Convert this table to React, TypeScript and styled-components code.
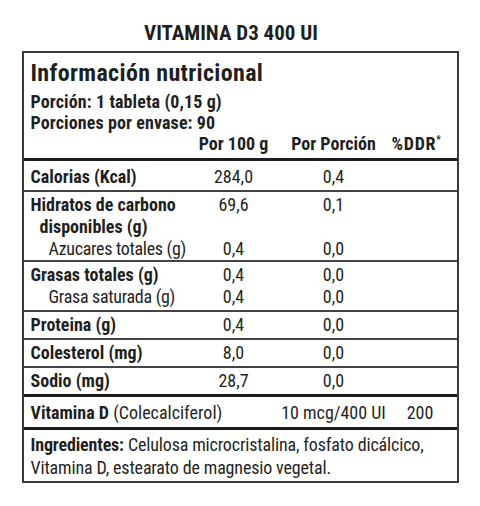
import React from "react";
import styled, { createGlobalStyle } from "styled-components";

const Global = createGlobalStyle`
  html, body { margin: 0; padding: 0; background: #ffffff; }
  body {
    font-family: "Roboto Condensed", "Roboto", sans-serif;
    font-stretch: condensed;
    color: #1f1f1f;
    width: 480px;
    height: 506px;
  }
`;

const Page = styled.div`
  display: flex;
  flex-direction: column;
  align-items: center;
  padding-top: 21px;
`;

const Title = styled.h1`
  margin: 0 18px 0 0;
  font-size: 21px;
  line-height: 24px;
  font-weight: 700;
`;

const Label = styled.div`
  margin-top: 6px;
  width: 437px;
  box-sizing: border-box;
  border: 2px solid #3a3a3a;
`;

const Head = styled.div`
  padding: 4px 7px 3px;
`;

const Heading = styled.h2`
  margin: 0 0 2px;
  font-size: 24px;
  line-height: 32px;
  font-weight: 700;
  letter-spacing: 0.35px;
`;

const Serving = styled.div`
  font-size: 18px;
  line-height: 21px;
  font-weight: 700;
  letter-spacing: 0.1px;
`;

const Grid = styled.div`
  display: grid;
  grid-template-columns: 153px 100px 100px 1fr;
`;

const ColHead = styled.div<{ $wide?: boolean }>`
  font-size: 18px;
  line-height: 22px;
  font-weight: 700;
  letter-spacing: ${(p) => (p.$wide ? "0.7px" : "0")};
  display: flex;
  justify-content: center;
  white-space: nowrap;
`;

const Star = styled.span`
  font-size: 10px;
  line-height: 10px;
  align-self: flex-start;
  margin-top: 2px;
`;

const Section = styled.div<{ $thick?: boolean; $top?: number; $bottom?: number }>`
  display: grid;
  grid-template-columns: 160px 100px 100px 1fr;
  border-top: ${(p) => (p.$thick ? "3px solid #1c1c1c" : "2px solid #444")};
  padding: ${(p) => p.$top ?? 2}px 0 ${(p) => p.$bottom ?? 2}px;
`;

const Name = styled.div<{ $indent?: number; $bold?: boolean }>`
  grid-column: 1;
  padding-left: ${(p) => 7 + (p.$indent ?? 0)}px;
  font-size: 18px;
  line-height: 22px;
  font-weight: ${(p) => (p.$bold === false ? 400 : 700)};
  letter-spacing: ${(p) => (p.$bold === false ? "-0.3px" : "0")};
  white-space: nowrap;
`;

const Value = styled.div<{ $col: number }>`
  grid-column: ${(p) => p.$col};
  font-size: 18px;
  line-height: 22px;
  display: flex;
  justify-content: center;
  white-space: nowrap;
`;

const WideName = styled(Name)`
  grid-column: 1 / span 2;
  b { font-weight: 700; }
  span { font-weight: 400; }
`;

const Ingredients = styled.div`
  border-top: 3px solid #1c1c1c;
  padding: 3px 7px 2px;
  font-size: 18px;
  line-height: 23px;
  letter-spacing: -0.15px;
  b { font-weight: 700; }
`;

type Row = { label: string; a: string; b: string; indent?: number; bold?: boolean };

const groups: { rows: Row[]; top: number; bottom: number }[] = [
  { top: 5, bottom: 2, rows: [{ label: "Calorias (Kcal)", a: "284,0", b: "0,4" }] },
  {
    top: 2,
    bottom: 0,
    rows: [
      { label: "Hidratos de carbono", a: "69,6", b: "0,1" },
      { label: "disponibles (g)", a: "", b: "", indent: 9 },
      { label: "Azucares totales (g)", a: "0,4", b: "0,0", indent: 18, bold: false },
    ],
  },
  {
    top: 2,
    bottom: 2,
    rows: [
      { label: "Grasas totales (g)", a: "0,4", b: "0,0" },
      { label: "Grasa saturada (g)", a: "0,4", b: "0,0", indent: 18, bold: false },
    ],
  },
  { top: 2, bottom: 2, rows: [{ label: "Proteina (g)", a: "0,4", b: "0,0" }] },
  { top: 2, bottom: 2, rows: [{ label: "Colesterol (mg)", a: "8,0", b: "0,0" }] },
  { top: 2, bottom: 2, rows: [{ label: "Sodio (mg)", a: "28,7", b: "0,0" }] },
];

export default function App() {
  return (
    <>
      <Global />
      <Page>
        <Title>VITAMINA D3 400 UI</Title>
        <Label>
          <Head>
            <Heading>Información nutricional</Heading>
            <Serving>Porción: 1 tableta (0,15 g)</Serving>
            <Serving>Porciones por envase: 90</Serving>
            <Grid>
              <div />
              <ColHead>Por 100 g</ColHead>
              <ColHead>Por Porción</ColHead>
              <ColHead $wide>
                %DDR<Star>*</Star>
              </ColHead>
            </Grid>
          </Head>
          {groups.map((g, gi) => (
            <Section key={gi} $thick={gi === 0} $top={g.top} $bottom={g.bottom}>
              {g.rows.map((r, ri) => (
                <React.Fragment key={ri}>
                  <Name $indent={r.indent} $bold={r.bold}>
                    {r.label}
                  </Name>
                  <Value $col={2}>{r.a}</Value>
                  <Value $col={3}>{r.b}</Value>
                </React.Fragment>
              ))}
            </Section>
          ))}
          <Section $thick $top={5} $bottom={3}>
            <WideName>
              <b>Vitamina D</b> <span>(Colecalciferol)</span>
            </WideName>
            <Value $col={3}>10 mcg/400 UI</Value>
            <Value $col={4}>200</Value>
          </Section>
          <Ingredients>
            <b>Ingredientes:</b> Celulosa microcristalina, fosfato dicálcico,
            <br />
            Vitamina D, estearato de magnesio vegetal.
          </Ingredients>
        </Label>
      </Page>
    </>
  );
}
